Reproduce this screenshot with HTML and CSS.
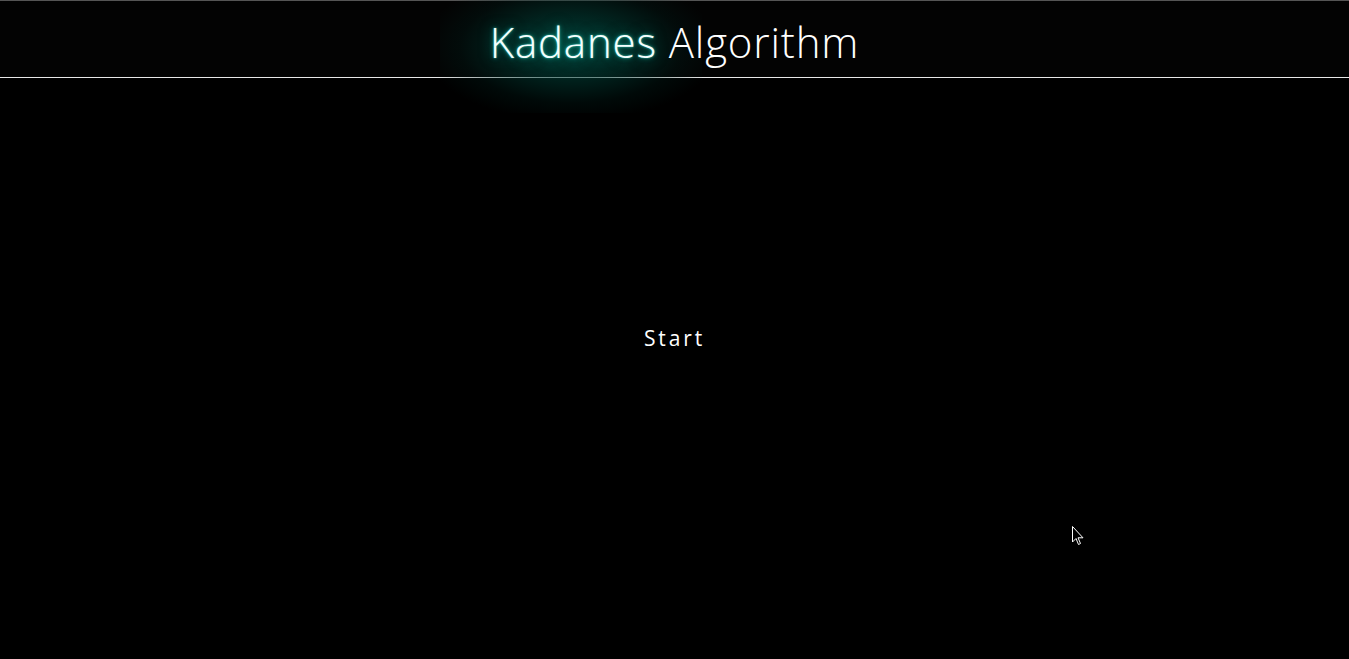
FILE: index.html
```html
<!DOCTYPE html>
<html>
<head>
<meta charset="utf-8">
<link rel="stylesheet" href="styles.css">
</head>
<body>
<header class="header">
  <h1 class="title"><span class="glow">Kadanes</span> Algorithm</h1>
</header>
<main class="stage">
  <button class="start">Start</button>
</main>
<svg class="cursor" width="13" height="20" viewBox="0 0 13 20"><path d="M0.5 0.5 L0.5 16 L4 12.5 L6.5 18.5 L8.5 17.5 L6 11.8 L11 11.8 Z" fill="#000" stroke="#fff" stroke-width="1"/></svg>
</body>
</html>
```
FILE: styles.css
```css
html, body {
  margin: 0;
  padding: 0;
  background: #000;
  height: 100%;
  overflow: hidden;
}
body {
  font-family: "Open Sans", "Liberation Sans", sans-serif;
  color: #fff;
  display: flex;
  flex-direction: column;
}
.header {
  height: 76px;
  border-top: 1px solid #555;
  border-bottom: 1px solid #e8e8e8;
  background: #030303;
  display: flex;
  justify-content: center;
  align-items: center;
  position: relative;
}
.title {
  margin: 0;
  font-weight: 300;
  font-size: 42px;
  letter-spacing: 0.85px;
  line-height: 1;
  padding-top: 6px;
  color: #fff;
  position: relative;
  z-index: 0;
}
.glow {
  position: relative;
  display: inline-block;
  color: #f6fffe;
  text-shadow: 0 0 2px rgba(70, 220, 205, 0.85), 0 0 5px rgba(20, 180, 160, 0.7), 0 0 14px rgba(0, 130, 115, 0.6);
}
.glow::before {
  content: "";
  position: absolute;
  left: -50px;
  right: -45px;
  top: -40px;
  bottom: -50px;
  background: radial-gradient(ellipse at 50% 50%, rgba(0, 80, 70, 0.8) 0%, rgba(0, 60, 52, 0.55) 35%, rgba(0, 38, 33, 0.25) 60%, rgba(0, 20, 18, 0) 80%);
  z-index: -1;
  pointer-events: none;
}
.stage {
  flex: 1;
  display: flex;
  justify-content: center;
  padding-top: 246px;
  align-items: flex-start;
}
.start {
  background: none;
  border: none;
  color: #fff;
  font-family: "Open Sans", "Liberation Sans", sans-serif;
  font-size: 21px;
  letter-spacing: 2.9px;
  padding: 0;
  line-height: 28px;
}
.cursor {
  position: absolute;
  left: 1072px;
  top: 526px;
}
```
